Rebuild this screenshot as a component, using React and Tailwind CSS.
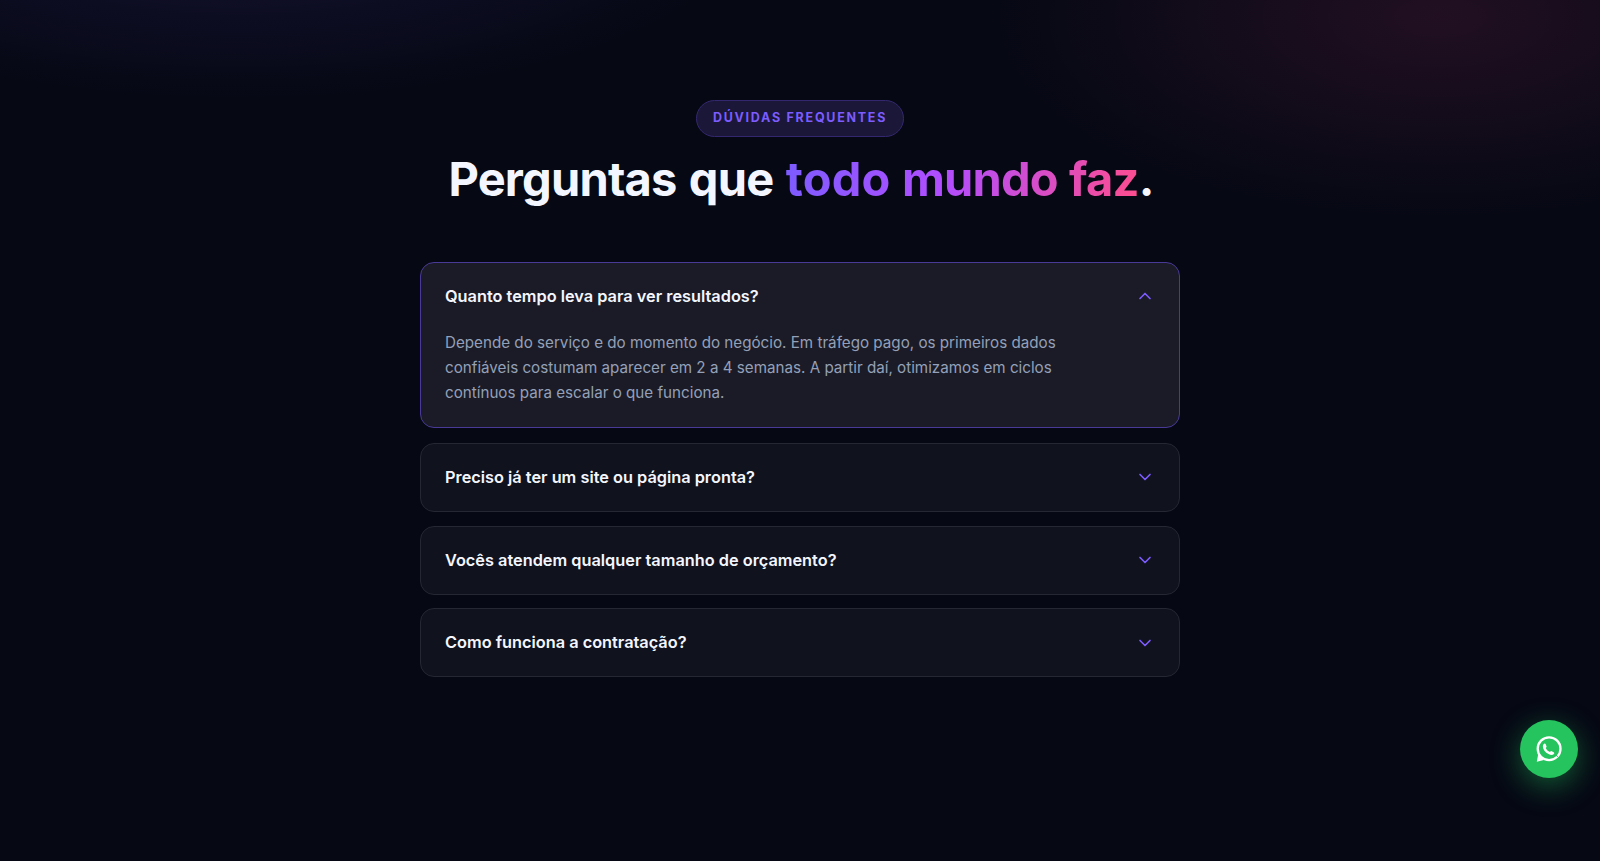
import { useState } from "react";

const faqs = [
  {
    question: "Quanto tempo leva para ver resultados?",
    answer:
      "Depende do serviço e do momento do negócio. Em tráfego pago, os primeiros dados confiáveis costumam aparecer em 2 a 4 semanas. A partir daí, otimizamos em ciclos contínuos para escalar o que funciona.",
  },
  {
    question: "Preciso já ter um site ou página pronta?",
    answer: "Não. Criamos a página junto com a campanha quando for necessário.",
  },
  {
    question: "Vocês atendem qualquer tamanho de orçamento?",
    answer: "Avaliamos cada caso e indicamos o melhor ponto de partida.",
  },
  {
    question: "Como funciona a contratação?",
    answer: "Começamos com uma conversa e enviamos uma proposta sob medida.",
  },
];

const FaqItem = ({ item, isOpen, onToggle }) => {
  return (
    <div
      className={`rounded-[14px] border ${
        isOpen
          ? "mb-[0.65px] bg-[#1a1b26] border-[#493a98]"
          : "bg-[#10121d] border-[#252732]"
      }`}
    >
      <button
        onClick={onToggle}
        aria-expanded={isOpen}
        className="w-full flex items-center justify-between px-6 py-5 text-left text-[16.32px] leading-[26.95px] font-semibold text-[#f4f6ff] cursor-pointer"
      >
        <span>{item.question}</span>
        <svg
          className={`w-5 h-5 text-[#7c5cff] ${isOpen ? "rotate-180" : ""}`}
          viewBox="0 0 24 24"
          fill="none"
          stroke="currentColor"
          strokeWidth="2"
          strokeLinecap="round"
          strokeLinejoin="round"
        >
          <path d="m6 9 6 6 6-6" />
        </svg>
      </button>
      {isOpen && (
        <p className="max-w-[670px] px-6 pb-[22px] text-[15.2px] leading-[25.08px] text-[#94a0b8]">
          {item.answer}
        </p>
      )}
    </div>
  );
};

const WhatsappIcon = () => (
  <svg className="w-[26px] h-[26px]" viewBox="0 0 26 26" fill="none">
    <circle cx="13.1" cy="12.7" r="11.4" stroke="currentColor" strokeWidth="2.3" />
    <path d="M2.2 18.2 0.8 25.8 8 24z" fill="currentColor" />
    <path
      d="M7.6 8.2c.7-1 1.7-.9 2.1 0l.8 2c.2.6-.1 1-.8 1.7.9 1.9 2.2 3.2 4.3 4.1.7-.8 1.1-1.1 1.7-.8l2 1c.8.4.7 1.3-.1 2.1-1.2 1.1-3 .9-5.1-.2-2.5-1.3-4.4-3.4-5.2-5.7-.6-1.7-.5-3.2.3-4.2z"
      fill="currentColor"
    />
    <path d="m20.2 19.1 1.5 1.8" stroke="#25c45f" strokeWidth="1" />
  </svg>
);

const App = () => {
  const [openIndex, setOpenIndex] = useState(0);

  return (
    <div className="min-h-screen bg-[#060814] font-[Inter,sans-serif]">
      <section className="min-h-screen pt-[100px] bg-[radial-gradient(ellipse_520px_186px_at_15%_-86px,#7c5cff22,transparent),radial-gradient(ellipse_448px_202px_at_90%_17px,#ff4d8d1c,transparent)]">
        <div className="max-w-[760px] mx-auto">
          <div className="flex flex-col items-center">
            <span className="h-[37px] flex items-center px-4 rounded-full border border-[#33286f] bg-[#1a1738] text-[12.48px] font-bold tracking-[0.14em] text-[#7c5cff]">
              DÚVIDAS FREQUENTES
            </span>
            <h2 className="mt-[14px] mb-14 pl-0.5 text-[47px] leading-[55px] font-bold tracking-[-0.8px] [word-spacing:2px] whitespace-nowrap text-[#f4f6ff]">
              Perguntas que{" "}
              <span className="bg-[linear-gradient(100deg,#7c5cff,#b14dff_45%,#ff4d8d)] bg-clip-text text-transparent [word-spacing:1px]">
                <span className="tracking-[0.2px]">todo</span> mundo faz
              </span>
              .
            </h2>
          </div>

          <div className="flex flex-col gap-[13.9px]">
            {faqs.map((item, index) => (
              <FaqItem
                key={item.question}
                item={item}
                isOpen={openIndex === index}
                onToggle={() => setOpenIndex(openIndex === index ? -1 : index)}
              />
            ))}
          </div>
        </div>
      </section>

      <button
        aria-label="WhatsApp"
        className="fixed right-[22px] bottom-[83px] w-[58px] h-[58px] rounded-full bg-[#25c45f] text-white flex items-center justify-center shadow-[0_8px_30px_#22c55e73]"
      >
        <WhatsappIcon />
      </button>
    </div>
  );
};

export default App;
